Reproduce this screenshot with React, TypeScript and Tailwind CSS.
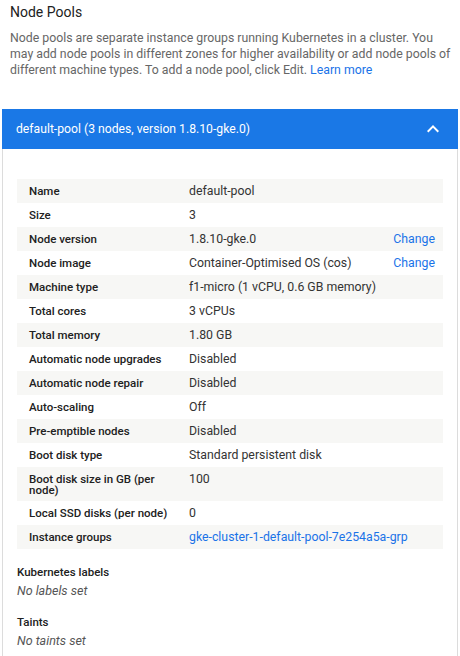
const rows: { label: string; value: string; link?: boolean; change?: boolean }[] = [
  { label: 'Name', value: 'default-pool' },
  { label: 'Size', value: '3' },
  { label: 'Node version', value: '1.8.10-gke.0', change: true },
  { label: 'Node image', value: 'Container-Optimised OS (cos)', change: true },
  { label: 'Machine type', value: 'f1-micro (1 vCPU, 0.6 GB memory)' },
  { label: 'Total cores', value: '3 vCPUs' },
  { label: 'Total memory', value: '1.80 GB' },
  { label: 'Automatic node upgrades', value: 'Disabled' },
  { label: 'Automatic node repair', value: 'Disabled' },
  { label: 'Auto-scaling', value: 'Off' },
  { label: 'Pre-emptible nodes', value: 'Disabled' },
  { label: 'Boot disk type', value: 'Standard persistent disk' },
  { label: 'Boot disk size in GB (per node)', value: '100' },
  { label: 'Local SSD disks (per node)', value: '0' },
  { label: 'Instance groups', value: 'gke-cluster-1-default-pool-7e254a5a-grp', link: true },
];

export default function App() {
  return (
    <div className="w-[460px] min-h-[656px] bg-white font-['Roboto',sans-serif] overflow-hidden">
      {/* intro */}
      <div className="pl-[10px] pr-[2px] pt-[2px]">
        <h2 className="text-[14px] leading-[20px] text-[#212121]">Node Pools</h2>
        <p className="mt-[8px] text-[12.3px] leading-[16px] text-[#666]">
          Node pools are separate instance groups running Kubernetes in a cluster. You may add node
          pools in different zones for higher availability or add node pools of different machine
          types. To add a node pool, click Edit.{' '}
          <a href="#" className="text-[#1a73e8]">
            Learn more
          </a>
        </p>
      </div>

      {/* pool panel */}
      <div className="mx-[2px] mt-[31px]">
        <div className="h-[40px] bg-[#1a78e6] flex items-center justify-between pl-[14px] pr-[13px]">
          <span className="text-[12.2px] text-white">default-pool (3 nodes, version 1.8.10-gke.0)</span>
          <svg width="24" height="24" viewBox="0 0 24 24" fill="white">
            <path d="M12 8l-6 6 1.41 1.41L12 10.83l4.59 4.58L18 14z" />
          </svg>
        </div>

        <div className="border-x border-b border-[#dcdcdc] px-[14px] pt-[30px] pb-[20px]">
          <div className="flex flex-col">
            {rows.map((r, i) => (
              <div
                key={r.label}
                className={`grid grid-cols-[172px_1fr_auto] items-start ${i % 2 === 0 ? 'bg-[#f7f7f5]' : 'bg-white'}`}
              >
                <div className="pl-[12px] pr-[12px] pt-[7px] pb-[5px] text-[11.5px] leading-[11px] font-medium text-[#212121]">
                  {r.label}
                </div>
                <div
                  className={`py-[4px] text-[12.3px] leading-[16px] ${r.link ? 'text-[#1a73e8]' : 'text-[#333]'}`}
                >
                  {r.value}
                </div>
                <div className="py-[4px] pr-[8px] text-[12.3px] leading-[16px] text-[#1a73e8]">
                  {r.change ? 'Change' : ''}
                </div>
              </div>
            ))}
          </div>

          <div className="mt-[15px] text-[11.5px] leading-[16px] font-medium text-[#212121]">Kubernetes labels</div>
          <div className="mt-[3px] text-[12.5px] leading-[16px] italic text-[#555]">No labels set</div>

          <div className="mt-[15px] text-[11.5px] leading-[16px] font-medium text-[#212121]">Taints</div>
          <div className="mt-[3px] text-[12.5px] leading-[16px] italic text-[#555]">No taints set</div>
        </div>
      </div>
    </div>
  );
}
